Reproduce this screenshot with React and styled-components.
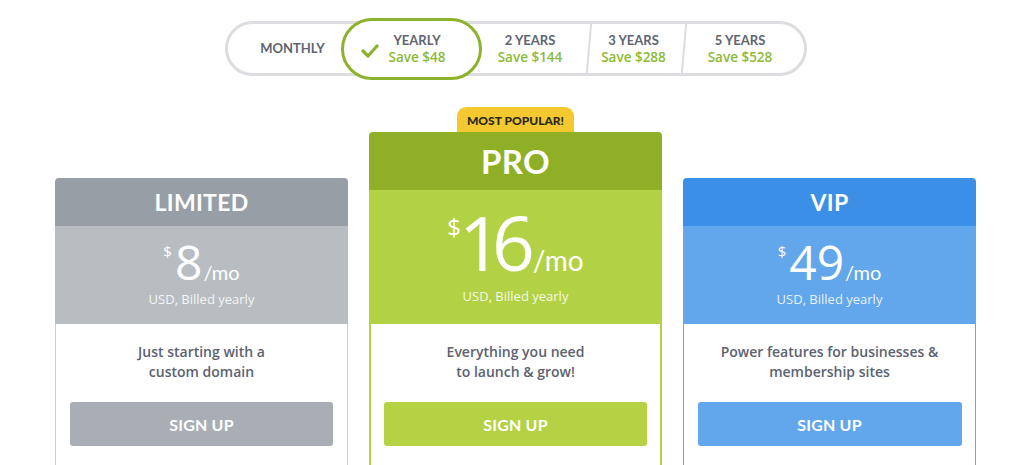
import React from "react";
import styled, { createGlobalStyle } from "styled-components";

const Global = createGlobalStyle`
  html, body { margin: 0; padding: 0; overflow: hidden; background: #ffffff; }
  body { font-family: "Open Sans", "Liberation Sans", sans-serif; }
  * { box-sizing: border-box; }
`;

const Page = styled.div`
  width: 1024px;
  padding: 21px 0 0 55px;
`;

const Column = styled.div`
  width: 921px;
  display: flex;
  flex-direction: column;
  align-items: center;
`;

const Toggle = styled.div`
  display: flex;
  align-items: center;
  height: 55px;
  border: 3px solid #dcdde0;
  border-radius: 30px;
  background: #fff;
`;

const Segment = styled.div`
  width: ${(p) => p.$w}px;
  height: 100%;
  display: flex;
  flex-direction: column;
  align-items: center;
  justify-content: center;
  padding-left: ${(p) => p.$pl || 0}px;
  padding-right: ${(p) => p.$pr || 0}px;
  text-align: center;
`;

const Selected = styled.div`
  width: 141px;
  height: 62px;
  flex: none;
  display: flex;
  align-items: center;
  gap: 10px;
  padding: 0 33px 0 17px;
  border: 3px solid #8db22d;
  border-radius: 32px;
  background: #fff;
`;

const CheckWrap = styled.div`
  display: flex;
  margin-top: 5px;
`;

const SelText = styled.div`
  display: flex;
  flex-direction: column;
  align-items: center;
  flex: 1;
`;

const Label = styled.div`
  font-family: Lato, "Liberation Sans", sans-serif;
  font-weight: 700;
  font-size: 13px;
  line-height: 17px;
  color: #5e6571;
  white-space: nowrap;
`;

const Save = styled.div`
  font-family: "Open Sans", "Liberation Sans", sans-serif;
  font-weight: 600;
  font-size: 13.5px;
  line-height: 17px;
  color: #8cb936;
  white-space: nowrap;
`;

const Separator = styled.div`
  width: 2px;
  align-self: stretch;
  background: #dcdde0;
  transform: skewX(-5deg);
  flex: none;
`;

const Cards = styled.div`
  margin-top: 31px;
  width: 921px;
  display: flex;
  align-items: flex-end;
  gap: 21px;
`;

const CardCol = styled.div`
  width: 293px;
  display: flex;
  flex-direction: column;
  align-items: center;
`;

const Badge = styled.div`
  width: 117px;
  height: 25px;
  display: flex;
  align-items: center;
  justify-content: center;
  background: #f4c92f;
  border-radius: 9px 9px 0 0;
  font-family: Lato, "Liberation Sans", sans-serif;
  font-weight: 900;
  font-size: 12px;
  color: #2b2a1c;
  padding-top: 1px;
`;

const Card = styled.div`
  width: 293px;
  border-radius: 4px 4px 0 0;
  overflow: hidden;
`;

const Header = styled.div`
  height: ${(p) => (p.$big ? 58 : 48)}px;
  background: ${(p) => p.$bg};
  display: flex;
  align-items: center;
  justify-content: center;
  font-family: Lato, "Liberation Sans", sans-serif;
  font-weight: 700;
  font-size: ${(p) => (p.$big ? 33 : 23)}px;
  color: #fff;
  letter-spacing: 0.3px;
`;

const PriceBox = styled.div`
  height: ${(p) => (p.$big ? 134 : 98)}px;
  background: ${(p) => p.$bg};
  display: flex;
  flex-direction: column;
  align-items: center;
  padding-top: ${(p) => (p.$big ? 15 : 12)}px;
  color: #fff;
`;

const PriceRow = styled.div`
  display: flex;
  align-items: baseline;
  font-family: Lato, "Liberation Sans", sans-serif;
  line-height: 1;
`;

const Currency = styled.span`
  align-self: flex-start;
  font-family: "Open Sans", "Liberation Sans", sans-serif;
  font-size: ${(p) => (p.$big ? 24 : 15)}px;
  line-height: 1;
  margin-top: ${(p) => (p.$big ? 10 : 6)}px;
  margin-right: ${(p) => (p.$big ? -2 : 3)}px;
`;

const Amount = styled.span`
  font-family: "Open Sans", "Liberation Sans", sans-serif;
  font-size: ${(p) => (p.$big ? 75 : 48)}px;
  font-weight: 400;
  letter-spacing: ${(p) => (p.$big ? -10 : 0)}px;
  line-height: 1;
`;

const Per = styled.span`
  font-size: ${(p) => (p.$big ? 28 : 20)}px;
  font-weight: 400;
  margin-left: ${(p) => (p.$big ? 8 : 1)}px;
`;

const Billed = styled.div`
  margin-top: ${(p) => (p.$big ? 7 : 4)}px;
  font-size: 13px;
  line-height: 18px;
  color: rgba(255, 255, 255, 0.88);
`;

const Body = styled.div`
  background: #fff;
  border-left: ${(p) => p.$bw}px solid ${(p) => p.$bc};
  border-right: ${(p) => p.$bw}px solid ${(p) => p.$bc};
  padding: 18px ${(p) => 15 - p.$bw}px 60px;
  display: flex;
  flex-direction: column;
  align-items: stretch;
`;

const Desc = styled.div`
  text-align: center;
  font-family: "Open Sans", "Liberation Sans", sans-serif;
  font-weight: 600;
  font-size: 14px;
  line-height: 20px;
  color: #5b6271;
`;

const Button = styled.button`
  margin-top: 20px;
  height: 44px;
  border: none;
  border-radius: 3px;
  background: ${(p) => p.$bg};
  color: #fff;
  font-family: Lato, "Liberation Sans", sans-serif;
  font-weight: 700;
  font-size: 16px;
  letter-spacing: 0.2px;
  cursor: pointer;
`;

const Check = () => (
  <svg width="18" height="14" viewBox="0 0 18 14">
    <path d="M2 7 L7 12 L16 2" fill="none" stroke="#8db22d" strokeWidth="3.2" strokeLinecap="round" strokeLinejoin="round" />
  </svg>
);

const plans = [
  {
    name: "LIMITED",
    price: "8",
    head: "#979ea5",
    price_bg: "#b8bdc1",
    btn: "#a8aeb4",
    border: "#c9cdd1",
    bw: 1,
    desc: ["Just starting with a", "custom domain"],
  },
  {
    name: "PRO",
    price: "16",
    head: "#8fb026",
    price_bg: "#b3d144",
    btn: "#b5d144",
    border: "#b3d144",
    bw: 2,
    big: true,
    desc: ["Everything you need", "to launch & grow!"],
  },
  {
    name: "VIP",
    price: "49",
    head: "#3b8fe6",
    price_bg: "#62a6ec",
    btn: "#62a6ec",
    border: "#62a6ec",
    bw: 1.5,
    desc: ["Power features for businesses &", "membership sites"],
  },
];

export default function App() {
  return (
    <Page>
      <Global />
      <Column>
        <Toggle>
          <Segment $w={113} $pl={17}>
            <Label>MONTHLY</Label>
          </Segment>
          <Selected>
            <CheckWrap>
              <Check />
            </CheckWrap>
            <SelText>
              <Label>YEARLY</Label>
              <Save>Save $48</Save>
            </SelText>
          </Selected>
          <Segment $w={106} $pr={9}>
            <Label>2 YEARS</Label>
            <Save>Save $144</Save>
          </Segment>
          <Separator />
          <Segment $w={93} $pr={5}>
            <Label>3 YEARS</Label>
            <Save>Save $288</Save>
          </Segment>
          <Separator />
          <Segment $w={119} $pr={8}>
            <Label>5 YEARS</Label>
            <Save>Save $528</Save>
          </Segment>
        </Toggle>
        <Cards>
          {plans.map((p) => (
            <CardCol key={p.name}>
              {p.big && <Badge>MOST POPULAR!</Badge>}
              <Card>
                <Header $bg={p.head} $big={p.big}>{p.name}</Header>
                <PriceBox $bg={p.price_bg} $big={p.big}>
                  <PriceRow>
                    <Currency $big={p.big}>$</Currency>
                    <Amount $big={p.big}>{p.price}</Amount>
                    <Per $big={p.big}>/mo</Per>
                  </PriceRow>
                  <Billed $big={p.big}>USD, Billed yearly</Billed>
                </PriceBox>
                <Body $bc={p.border} $bw={p.bw}>
                  <Desc>
                    {p.desc[0]}
                    <br />
                    {p.desc[1]}
                  </Desc>
                  <Button $bg={p.btn}>SIGN UP</Button>
                </Body>
              </Card>
            </CardCol>
          ))}
        </Cards>
      </Column>
    </Page>
  );
}
